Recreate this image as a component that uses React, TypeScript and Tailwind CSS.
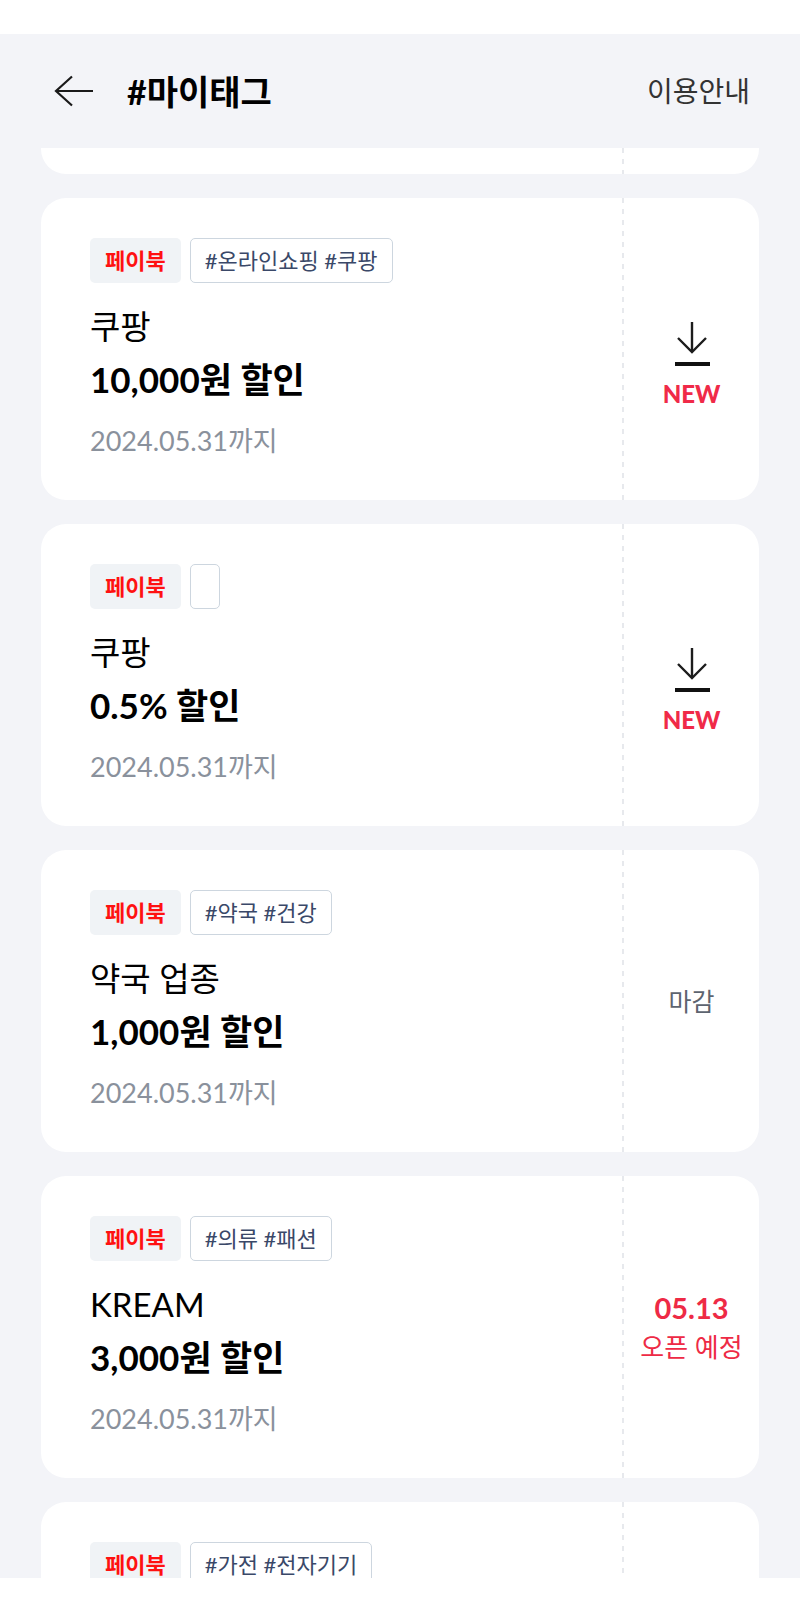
import { FC } from "react";

type Status =
  | { kind: "new" }
  | { kind: "closed" }
  | { kind: "soon"; date: string };

type Coupon = {
  id: number;
  tags: string;
  brand: string;
  benefit: string;
  until: string;
  status: Status;
};

const coupons: Coupon[] = [
  { id: 1, tags: "#온라인쇼핑 #쿠팡", brand: "쿠팡", benefit: "10,000원 할인", until: "2024.05.31까지", status: { kind: "new" } },
  { id: 2, tags: "", brand: "쿠팡", benefit: "0.5% 할인", until: "2024.05.31까지", status: { kind: "new" } },
  { id: 3, tags: "#약국 #건강", brand: "약국 업종", benefit: "1,000원 할인", until: "2024.05.31까지", status: { kind: "closed" } },
  { id: 4, tags: "#의류 #패션", brand: "KREAM", benefit: "3,000원 할인", until: "2024.05.31까지", status: { kind: "soon", date: "05.13" } },
  { id: 5, tags: "#가전 #전자기기", brand: "하이마트", benefit: "5,000원 할인", until: "2024.05.31까지", status: { kind: "new" } },
];

const Divider = () => (
  <div className="w-[2px] self-stretch bg-[repeating-linear-gradient(to_bottom,#e7e9ed_0px,#e7e9ed_5px,transparent_5px,transparent_11px)]" />
);

const DownloadIcon = () => (
  <svg width="36" height="46" viewBox="0 0 36 46" fill="none">
    <path d="M18 0 V30" stroke="#1c1c1c" strokeWidth="2.4" />
    <path d="M4 16 L18 30 L32 16" stroke="#1c1c1c" strokeWidth="2.4" strokeLinejoin="miter" />
    <rect x="1" y="40" width="35" height="4" fill="#111111" />
  </svg>
);

const StatusView: FC<{ status: Status }> = ({ status }) => {
  if (status.kind === "new") {
    return (
      <div className="flex flex-1 flex-col items-center pt-[124px]">
        <DownloadIcon />
        <span className="mt-[12px] text-[24px] leading-[28px] font-black text-[#f02a48]">NEW</span>
      </div>
    );
  }
  if (status.kind === "closed") {
    return (
      <div className="flex flex-1 items-center justify-center">
        <span className="text-[25px] leading-[32px] text-[#5d6470]">마감</span>
      </div>
    );
  }
  return (
    <div className="flex flex-1 flex-col items-center justify-center">
      <span className="text-[29px] leading-[34px] font-bold text-[#ee2a45]">{status.date}</span>
      <span className="mt-[6px] text-[26px] leading-[32px] text-[#ee2a45]">오픈 예정</span>
    </div>
  );
};

const CouponCard: FC<{ coupon: Coupon }> = ({ coupon }) => (
  <div className="flex h-[302px] shrink-0 rounded-[25px] bg-white">
    <div className="flex w-[581px] flex-col pl-[49px] pt-[40px]">
      <div className="flex h-[45px] gap-[9px]">
        <span className="flex items-center rounded-[5px] bg-[#f0f3f6] px-[15px] text-[22px] font-bold text-[#ff1111]">
          페이북
        </span>
        <span className="flex items-center rounded-[5px] border-[1.5px] border-[#cdd6df] px-[14px] text-[22px] text-[#3a4868]">
          {coupon.tags}
        </span>
      </div>
      <p className="mt-[23px] text-[33px] leading-[40px] text-black">{coupon.brand}</p>
      <p className="mt-[11px] text-[35px] leading-[44px] font-bold text-black">{coupon.benefit}</p>
      <p className="mt-[22px] text-[27px] leading-[36px] text-[#8a919c]">{coupon.until}</p>
    </div>
    <Divider />
    <StatusView status={coupon.status} />
  </div>
);

export default function App() {
  return (
    <div className="flex h-[1612px] w-[800px] flex-col bg-white font-['Lato','Noto_Sans_CJK_KR',sans-serif]">
      <div className="h-[34px] shrink-0 bg-white" />
      <div className="flex h-[1544px] shrink-0 flex-col overflow-hidden bg-[#f3f4f8]">
        <header className="flex h-[114px] shrink-0 items-center pl-[54px] pr-[50px]">
          <svg width="40" height="32" viewBox="0 0 40 32" fill="none">
            <path d="M39 16 H2" stroke="#1a1a1a" strokeWidth="2.2" />
            <path d="M18 1.5 L2 16 L18 30.5" stroke="#1a1a1a" strokeWidth="2.2" />
          </svg>
          <h1 className="ml-[33px] text-[34px] font-bold text-black">#마이태그</h1>
          <span className="ml-auto text-[28px] text-[#333333]">이용안내</span>
        </header>
        <div className="flex flex-col gap-[24px] px-[41px]">
          {/* previous card, scrolled under the header */}
          <div className="flex h-[26px] shrink-0 rounded-b-[25px] bg-white">
            <div className="w-[581px]" />
            <Divider />
          </div>
          {coupons.map(c => (
            <CouponCard key={c.id} coupon={c} />
          ))}
        </div>
      </div>
      <div className="h-[34px] shrink-0 bg-white" />
    </div>
  );
}
